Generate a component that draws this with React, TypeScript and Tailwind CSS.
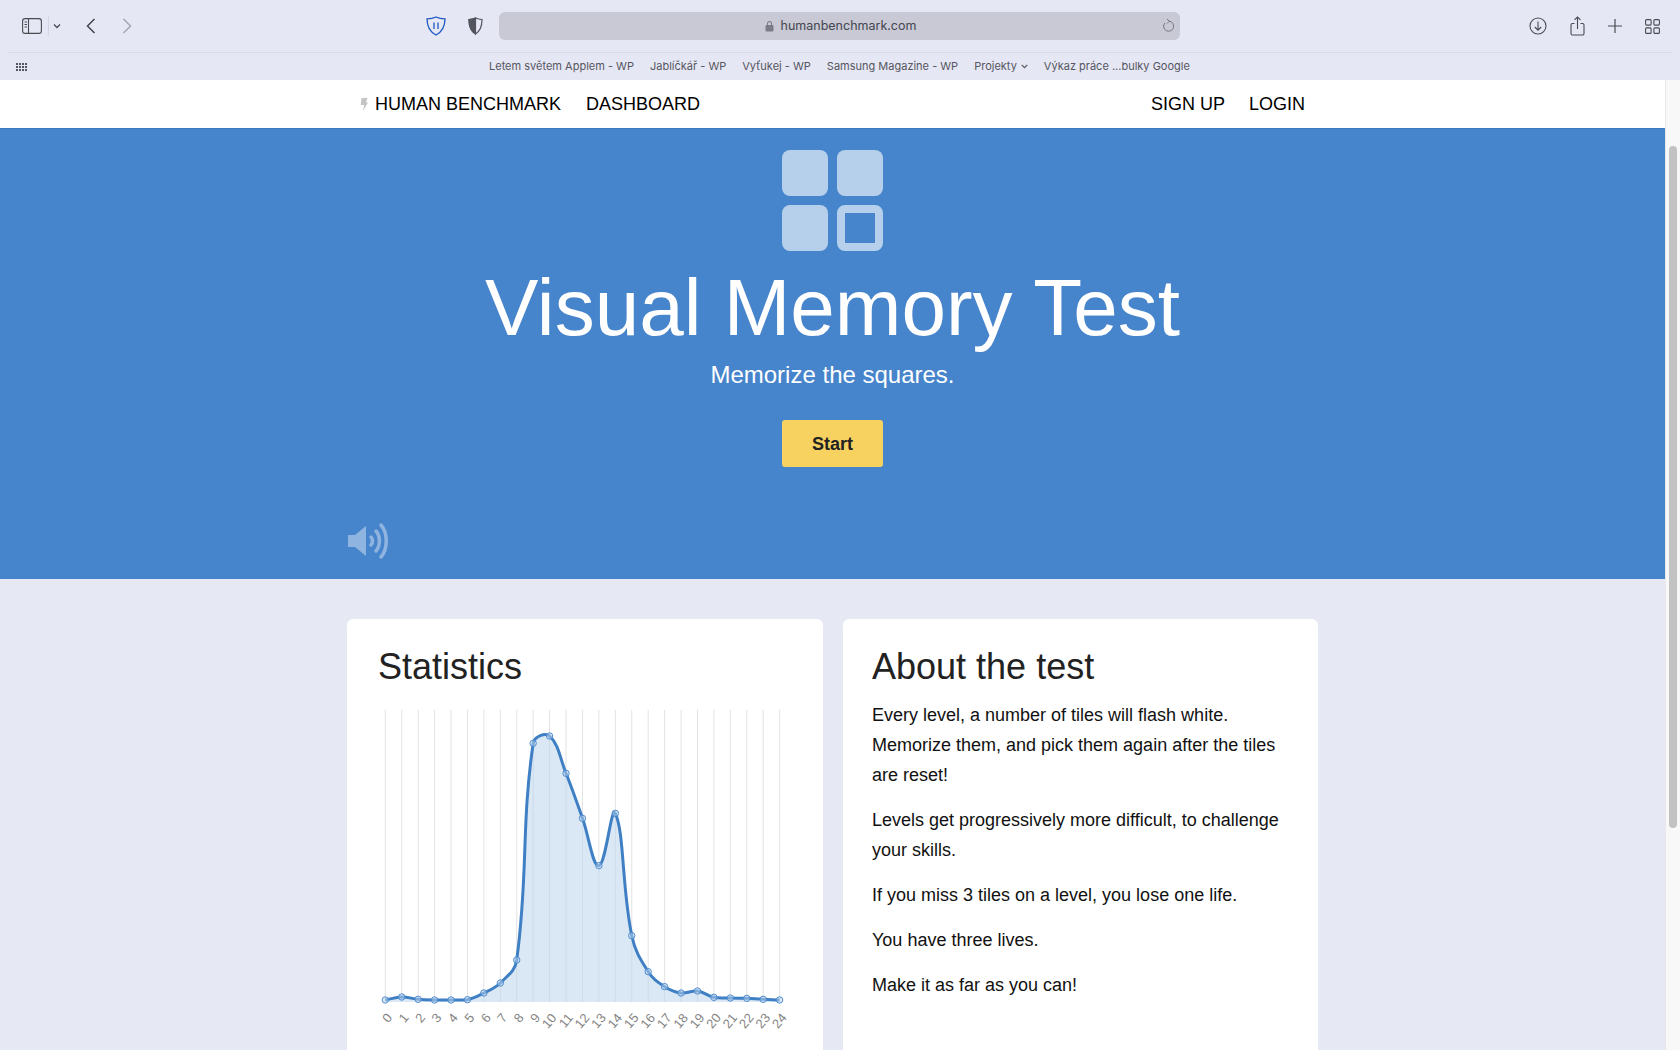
const points = [900, 891, 898, 900, 900, 899, 879, 849, 780, 130, 108, 220, 355, 497, 340, 707, 815, 860, 879, 873, 892, 894, 895, 898, 900].map((v, i) => ({
  x: 8.3 + i * 16.43,
  y: (v - 30) / 3,
}));

// same control points chart.js computes for a tension of 0.4
const buildLine = () => {
  const dist = (a: { x: number; y: number }, b: { x: number; y: number }) => Math.hypot(a.x - b.x, a.y - b.y);
  const ctrl = points.map((cur, i) => {
    const prev = points[Math.max(i - 1, 0)];
    const next = points[Math.min(i + 1, points.length - 1)];
    const d01 = dist(prev, cur);
    const d12 = dist(cur, next);
    const sum = d01 + d12 || 1;
    const fa = (0.4 * d01) / sum;
    const fb = (0.4 * d12) / sum;
    return {
      px: cur.x - fa * (next.x - prev.x),
      py: Math.min(cur.y - fa * (next.y - prev.y), 290),
      nx: cur.x + fb * (next.x - prev.x),
      ny: Math.min(cur.y + fb * (next.y - prev.y), 290),
    };
  });
  let d = `M${points[0].x} ${points[0].y}`;
  for (let i = 1; i < points.length; i++) {
    d += ` C${ctrl[i - 1].nx.toFixed(1)} ${ctrl[i - 1].ny.toFixed(1)} ${ctrl[i].px.toFixed(1)} ${ctrl[i].py.toFixed(1)} ${points[i].x.toFixed(1)} ${points[i].y.toFixed(1)}`;
  }
  return d;
};

const line = buildLine();
const area = `${line} L${points[24].x} 292 L${points[0].x} 292 Z`;

const bookmarks = ['Letem světem Applem - WP', 'Jablíčkář - WP', 'Vyťukej - WP', 'Samsung Magazine - WP'];

const BrowserChrome = () => (
  <div className="h-20 shrink-0 bg-[#e6e7f4] text-[#55565f] font-['Inter',sans-serif]">
    <div className="flex h-[52px] items-center pl-[21px] pr-[20px]">
      <svg width="28" height="20" viewBox="0 0 28 20" fill="none" stroke="#4a4b52" strokeWidth="1.1">
        <rect x="1.600" y="2.600" width="18.800" height="14.800" rx="2.500" />
        <path d="M7.500 3v14" />
        <path d="M3.500 6h2.500M3.500 8.500h2.500M3.500 11h2.500" strokeWidth="1" />
        <path d="M27.500 0v20" stroke="#d5d6e3" />
      </svg>
      <svg className="ml-[4px]" width="8" height="6" viewBox="0 0 8 6" fill="none" stroke="#4a4b52" strokeWidth="1.3">
        <path d="M1 1.500l3 3 3-3" />
      </svg>
      <svg className="ml-[25px]" width="10" height="16" viewBox="0 0 10 16" fill="none" stroke="#44454c" strokeWidth="1.5">
        <path d="M8.500 1L1.500 8l7 7" />
      </svg>
      <svg className="ml-[26px]" width="10" height="16" viewBox="0 0 10 16" fill="none" stroke="#a5a6b0" strokeWidth="1.5">
        <path d="M1.500 1l7 7-7 7" />
      </svg>
      <svg className="ml-[294px]" width="20" height="20" viewBox="0 0 20 20" fill="none" stroke="#1d58c4" strokeWidth="1.300">
        <path d="M10 1c3 1.400 5.500 1.800 9 1.800 0 7-2 12.700-9 16.200C3 15.500 1 9.800 1 2.800 4.500 2.800 7 2.400 10 1z" />
        <path d="M8 6.500v6.500M12 6.500v6.500" strokeWidth="1.300" />
      </svg>
      <svg className="ml-[22px]" width="15" height="18" viewBox="0 0 15 18" fill="none" stroke="#53545e" strokeWidth="1.200">
        <path d="M7.500 1C5.500 1.800 3.500 2.300 1 2.500c0 6.500 1.500 11.500 6.500 14.500 5-3 6.500-8 6.500-14.500C11.500 2.300 9.500 1.800 7.500 1z" />
        <path d="M7.500 1C5.500 1.800 3.500 2.300 1 2.500c0 6.500 1.500 11.500 6.500 14.500z" fill="#53545e" />
      </svg>
      <div className="relative ml-[16px] flex h-[28px] w-[681px] items-center justify-center rounded-[6px] bg-[#c8c9d5] pl-[2px] text-[12.5px] text-[#45464f]">
        <svg className="mr-[7px]" width="9" height="12" viewBox="0 0 9 12" fill="#7b7c86">
          <path d="M2 5V3.500a2.500 2.500 0 0 1 5 0V5H6V3.500a1.500 1.500 0 0 0-3 0V5z" />
          <rect x="0.500" y="5" width="8" height="6.500" rx="1" />
        </svg>
        humanbenchmark.com
        <svg className="absolute right-[5px] top-[6px]" width="14" height="16" viewBox="0 0 14 16" fill="none" stroke="#74757f" strokeWidth="1">
          <path d="M8 3.200A5 5 0 1 1 3.800 5" />
          <path d="M6 1l2.300 2.200L6 5.500" />
        </svg>
      </div>
      <div className="ml-auto flex items-center gap-[23px]">
        <svg width="18" height="18" viewBox="0 0 18 18" fill="none" stroke="#4a4b52" strokeWidth="1.100">
          <circle cx="9" cy="9" r="8" />
          <path d="M9 4.500v8.500M5.800 10l3.200 3.200 3.200-3.200" />
        </svg>
        <svg width="15" height="20" viewBox="0 0 15 20" fill="none" stroke="#4a4b52" strokeWidth="1.100">
          <path d="M4.500 7.500H2.500a1.500 1.500 0 0 0-1.500 1.500v8.500a1.500 1.500 0 0 0 1.500 1.500h10a1.500 1.500 0 0 0 1.500-1.500V9a1.500 1.500 0 0 0-1.500-1.500h-2" />
          <path d="M7.500 13V1M4.500 3.800L7.500 1l3 2.800" />
        </svg>
        <svg width="14" height="14" viewBox="0 0 14 14" fill="none" stroke="#4a4b52" strokeWidth="1.200">
          <path d="M7 0v14M0 7h14" />
        </svg>
        <svg width="15" height="15" viewBox="0 0 15 15" fill="none" stroke="#4a4b52" strokeWidth="1.100">
          <rect x="0.600" y="0.600" width="5.500" height="5.500" rx="1" />
          <rect x="8.900" y="0.600" width="5.500" height="5.500" rx="1" />
          <rect x="0.600" y="8.900" width="5.500" height="5.500" rx="1" />
          <rect x="8.900" y="8.900" width="5.500" height="5.500" rx="1" />
        </svg>
      </div>
    </div>
    <div className="mx-[8px] flex h-[28px] items-center border-t border-[#d9dae6] text-[11px]">
      <div className="ml-[8px] grid grid-cols-4 gap-[1px]">
        {Array.from({ length: 12 }).map((_, i) => (
          <span key={i} className="h-[2px] w-[2px] bg-[#55565f]" />
        ))}
      </div>
      <div className="ml-[462px] flex items-center gap-[16px]">
        {bookmarks.map((b) => (
          <span key={b}>{b}</span>
        ))}
        <span className="flex items-center gap-[4px]">
          Projekty
          <svg width="7" height="5" viewBox="0 0 7 5" fill="none" stroke="#55565f" strokeWidth="1.200">
            <path d="M0.700 0.800l2.800 2.800 2.800-2.800" />
          </svg>
        </span>
        <span>Výkaz práce ...bulky Google</span>
      </div>
    </div>
  </div>
);

const Chart = () => (
  <svg className="mt-[21px]" width="420" height="340" viewBox="0 0 420 340">
    {points.map((p) => (
      <line key={p.x} x1={p.x} x2={p.x} y1="0" y2="292" stroke="#e3e3e3" strokeWidth="1" />
    ))}
    <path d={area} fill="#bcd5ee" fillOpacity="0.55" />
    <path d={line} fill="none" stroke="#3f7fc4" strokeWidth="3" />
    {points.map((p, i) => (
      <circle key={i} cx={p.x} cy={p.y} r="3.200" fill="#bcd5ee" fillOpacity="0.5" stroke="#4f8dd0" strokeWidth="1" />
    ))}
    {points.map((p, i) => (
      <text
        key={i}
        x={p.x + 4.6}
        y={305.5}
        dy="4"
        fontSize="13"
        fill="#858585"
        textAnchor="end"
        transform={`rotate(-50 ${p.x + 4.6} 305.5)`}
      >
        {i}
      </text>
    ))}
  </svg>
);

export default function App() {
  return (
    <div className="flex h-[1050px] w-[1680px] flex-col overflow-hidden bg-[#e6e8f4] font-['Liberation_Sans',Arial,sans-serif]">
      <BrowserChrome />
      <div className="flex min-h-0 flex-1">
        <div className="w-[1665px] shrink-0">
          <nav className="flex h-12 items-center bg-white pl-[360px] pr-[360px] text-[18px] text-black">
            <svg width="8" height="13" viewBox="0 0 8 13" fill="#c4c4c4">
              <path d="M1.500 0h6L6 4.500h2L3 13l1.200-6H0.800z" />
            </svg>
            <span className="ml-[7px]">HUMAN BENCHMARK</span>
            <span className="ml-[25px]">DASHBOARD</span>
            <span className="ml-auto">SIGN UP</span>
            <span className="ml-[24px]">LOGIN</span>
          </nav>
          <section className="relative flex h-[451px] flex-col items-center border-t border-[#3f79bb] bg-[#4684cb] text-white">
            <div className="mt-[21px] grid grid-cols-2 gap-[9px]">
              <div className="h-[46px] w-[46px] rounded-[8px] bg-[#b6cfeb]" />
              <div className="h-[46px] w-[46px] rounded-[8px] bg-[#b6cfeb]" />
              <div className="h-[46px] w-[46px] rounded-[8px] bg-[#b6cfeb]" />
              <div className="h-[46px] w-[46px] rounded-[8px] border-[8px] border-[#b6cfeb]" />
            </div>
            <h1 className="mt-[8px] text-[80px] leading-[98px]">Visual Memory Test</h1>
            <p className="text-[24px] leading-[36px]">Memorize the squares.</p>
            <button className="mt-[27px] h-[47px] w-[101px] rounded-[3px] bg-[#f8d260] pt-[1px] text-[18px] font-bold text-[#222]">
              Start
            </button>
            <svg className="absolute left-[348px] top-[394px]" width="42" height="36" viewBox="0 0 42 36" fill="#8fb4e0">
              <path d="M0 12h7l11-9v30L7 24H0z" />
              <path d="M23 14c2 2 2 6 0 8" fill="none" stroke="#8fb4e0" strokeWidth="3.500" strokeLinecap="round" />
              <path d="M28 8c4.500 5 4.500 15 0 20" fill="none" stroke="#8fb4e0" strokeWidth="3.500" strokeLinecap="round" />
              <path d="M33 2c7 8 7 24 0 32" fill="none" stroke="#8fb4e0" strokeWidth="3.500" strokeLinecap="round" />
            </svg>
          </section>
          <div className="ml-[347px] mt-[40px] flex gap-[20px]">
            <div className="h-[500px] w-[476px] rounded-[6px] bg-white px-[31px] pt-[25px]">
              <h2 className="text-[36px] leading-[45px] text-[#222]">Statistics</h2>
              <div className="-ml-[1px]">
                <Chart />
              </div>
            </div>
            <div className="h-[500px] w-[475px] rounded-[6px] bg-white pl-[29px] pr-[30px] pt-[25px] text-[18px] leading-[30px] text-[#111]">
              <h2 className="mb-[11px] text-[36px] leading-[45px] text-[#222]">About the test</h2>
              <p className="mb-[15px]">Every level, a number of tiles will flash white. Memorize them, and pick them again after the tiles are reset!</p>
              <p className="mb-[15px]">Levels get progressively more difficult, to challenge your skills.</p>
              <p className="mb-[15px]">If you miss 3 tiles on a level, you lose one life.</p>
              <p className="mb-[15px]">You have three lives.</p>
              <p>Make it as far as you can!</p>
            </div>
          </div>
        </div>
        <div className="w-[15px] shrink-0 border-l border-[#e8e8e8] bg-[#f8f8f8] pl-[3px] pt-[66px]">
          <div className="h-[682px] w-[8px] rounded-full bg-[#c2c2c2]" />
        </div>
      </div>
    </div>
  );
}
